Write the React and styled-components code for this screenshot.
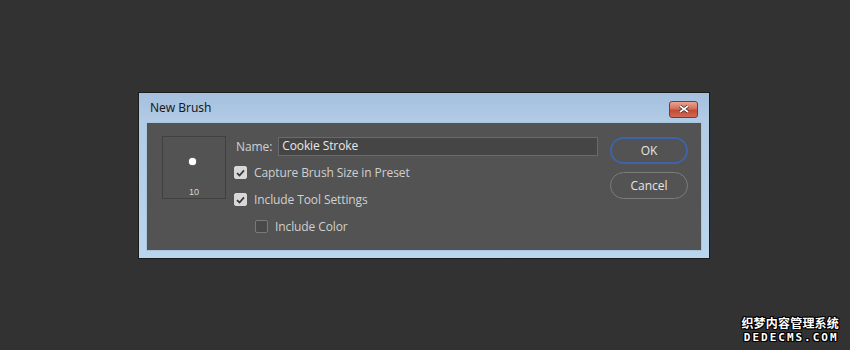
import React from 'react'
import styled, { createGlobalStyle } from 'styled-components'

const Global = createGlobalStyle`
  html, body { margin: 0; padding: 0; background: #323232; }
  body { font-family: "Open Sans", "Liberation Sans", sans-serif; }
`

const Page = styled.div`
  position: relative;
  width: 850px;
  height: 350px;
  padding: 92px 0 0 138px;
  box-sizing: border-box;
`

const Window = styled.div`
  width: 572px;
  height: 167px;
  box-sizing: border-box;
  border: 1px solid #1c1c1c;
  background: linear-gradient(180deg, #a4c0de 0px, #b3cce6 30px, #bad5ee 100%);
  display: flex;
  flex-direction: column;
  padding: 0 7px 7px 7px;
`

const TitleBar = styled.div`
  height: 29px;
  display: flex;
  align-items: center;
  justify-content: space-between;
  padding: 0 4px 0 4px;
`

const Title = styled.span`
  font-family: "Noto Sans", "Liberation Sans", sans-serif;
  font-size: 12px;
  color: #1a1a1a;
  margin-top: -1px;
`

const CloseButton = styled.div`
  width: 29px;
  height: 17px;
  margin-top: 3px;
  border-radius: 3px;
  border: 1px solid #7d3a2c;
  box-sizing: border-box;
  background: linear-gradient(180deg, #e9a393 0%, #d3705a 45%, #c24b34 55%, #cf6a52 100%);
  display: flex;
  align-items: center;
  justify-content: center;
`

const Panel = styled.div`
  flex: 1;
  background: #535353;
  display: flex;
  padding: 14px 14px 0 15px;
  border: 1px solid #a8c4de;
`

const Preview = styled.div`
  width: 64px;
  height: 63px;
  box-sizing: border-box;
  border: 1px solid #404040;
  display: flex;
  flex-direction: column;
  align-items: center;
  margin-top: -1px;
`

const Dot = styled.div`
  width: 7px;
  height: 7px;
  border-radius: 50%;
  background: #ffffff;
  box-shadow: 0 0 1px #fff;
  margin: 21px 3px 0 0;
`

const Size = styled.span`
  font-family: "Liberation Sans", sans-serif;
  font-size: 9px;
  color: #d6d6d6;
  margin-top: auto;
  margin-bottom: 1px;
`

const Fields = styled.div`
  margin-left: 10px;
  display: flex;
  flex-direction: column;
  gap: 6px;
`

const NameRow = styled.label`
  display: flex;
  align-items: center;
  gap: 6px;
  height: 19px;
`

const Label = styled.span`
  font-size: 12px;
  color: #d0d0d0;
  letter-spacing: -0.1px;
`

const Input = styled.div`
  width: 320px;
  height: 19px;
  box-sizing: border-box;
  background: #454545;
  border: 1px solid #6a6a6a;
  font-size: 12px;
  color: #e8e8e8;
  padding: 0 3px;
  line-height: 16px;
  letter-spacing: -0.1px;
`

const Check = styled.div`
  display: flex;
  align-items: center;
  gap: 7px;
  height: 21px;
  margin-left: ${p => (p.indent ? '19px' : '-2px')};
`

const Box = styled.div`
  width: 13px;
  height: 13px;
  border-radius: 2px;
  box-sizing: border-box;
  background: ${p => (p.checked ? '#d8d8d8' : '#4a4a4a')};
  border: 1px solid ${p => (p.checked ? '#d8d8d8' : '#7a7a7a')};
  display: flex;
  align-items: center;
  justify-content: center;
`

const Buttons = styled.div`
  margin-left: auto;
  display: flex;
  flex-direction: column;
  gap: 8px;
  margin-right: -1px;
`

const Button = styled.div`
  width: 78px;
  height: 27px;
  box-sizing: border-box;
  border-radius: 14px;
  border: ${p => (p.primary ? '2px solid #3e63a8' : '1px solid #7c7c7c')};
  display: flex;
  align-items: center;
  justify-content: center;
  font-size: 12px;
  color: #e6e6e6;
`

const Watermark = styled.div`
  position: absolute;
  right: 11px;
  bottom: 7px;
  display: flex;
  flex-direction: column;
  align-items: center;
  color: #fff;
  font-weight: bold;
  line-height: 1;
  text-shadow: 1px 0 #000, -1px 0 #000, 0 1px #000, 0 -1px #000, 1px 1px #000, -1px -1px #000, 1px -1px #000, -1px 1px #000;
`

const WmCn = styled.span`
  font-family: "Noto Sans CJK SC", sans-serif;
  font-size: 12px;
  line-height: 13px;
  letter-spacing: 0.2px;
`

const WmEn = styled.span`
  font-family: "DejaVu Sans Mono", monospace;
  font-size: 11px;
  line-height: 11px;
  letter-spacing: 2px;
  margin-top: 3px;
  margin-right: -2px;
`

const Tick = () => (
  <svg width="9" height="8" viewBox="0 0 9 8">
    <path d="M1 4.2 L3.5 6.5 L8 1.3" fill="none" stroke="#3a3a3a" strokeWidth="1.8" />
  </svg>
)

const CloseX = () => (
  <svg width="10" height="8" viewBox="0 0 10 8">
    <path d="M1 1 L9 7 M9 1 L1 7" stroke="#3a1a14" strokeWidth="3" />
    <path d="M1 1 L9 7 M9 1 L1 7" stroke="#ffffff" strokeWidth="1.6" />
  </svg>
)

export default function App() {
  return (
    <Page>
      <Global />
      <Window>
        <TitleBar>
          <Title>New Brush</Title>
          <CloseButton>
            <CloseX />
          </CloseButton>
        </TitleBar>
        <Panel>
          <Preview>
            <Dot />
            <Size>10</Size>
          </Preview>
          <Fields>
            <NameRow>
              <Label>Name:</Label>
              <Input>Cookie Stroke</Input>
            </NameRow>
            <Check>
              <Box checked><Tick /></Box>
              <Label>Capture Brush Size in Preset</Label>
            </Check>
            <Check>
              <Box checked><Tick /></Box>
              <Label>Include Tool Settings</Label>
            </Check>
            <Check indent>
              <Box />
              <Label>Include Color</Label>
            </Check>
          </Fields>
          <Buttons>
            <Button primary>OK</Button>
            <Button>Cancel</Button>
          </Buttons>
        </Panel>
      </Window>
      <Watermark>
        <WmCn>织梦内容管理系统</WmCn>
        <WmEn>DEDECMS.COM</WmEn>
      </Watermark>
    </Page>
  )
}
